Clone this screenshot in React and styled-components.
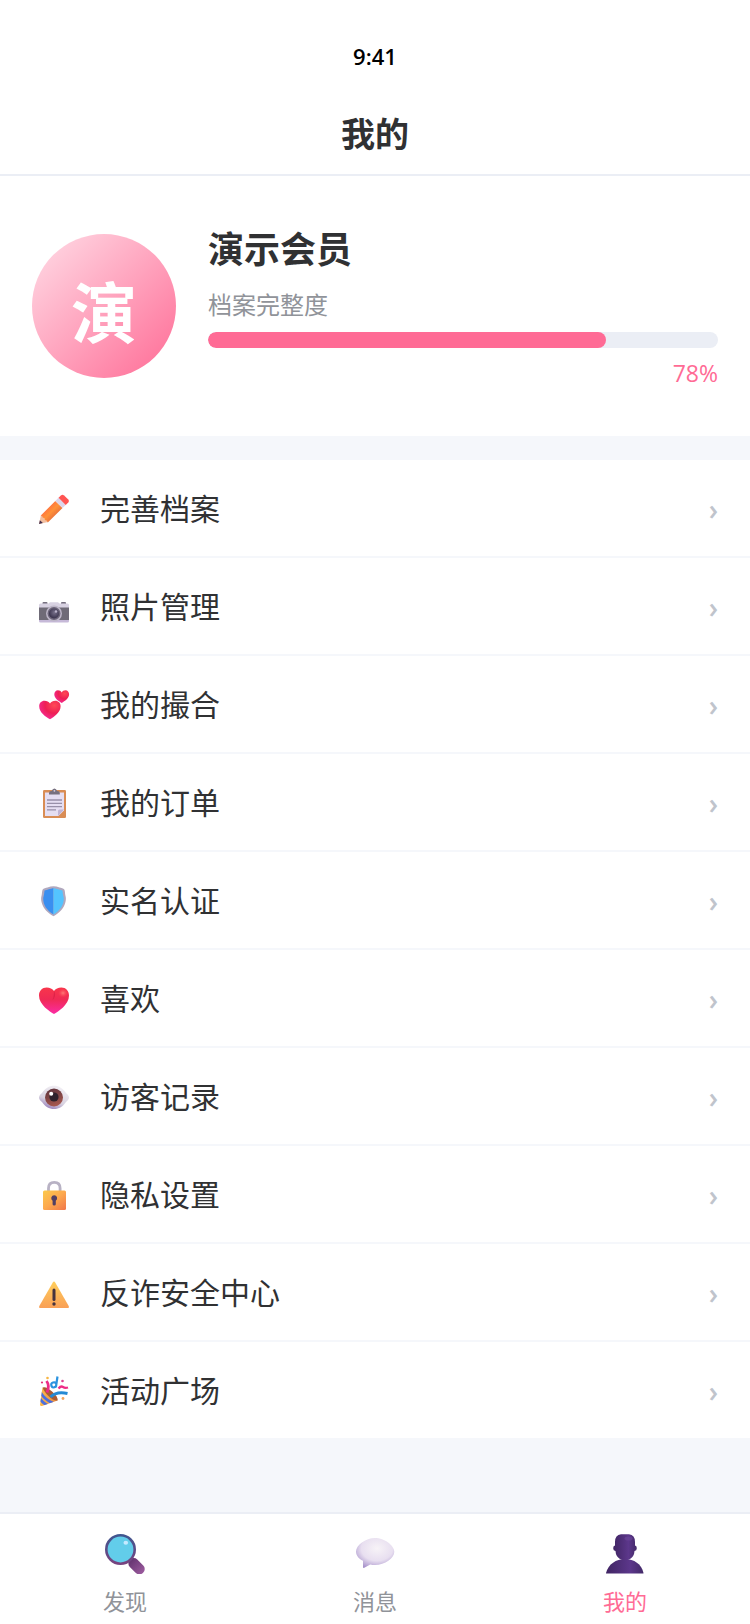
import React from 'react';
import styled, { createGlobalStyle, ThemeProvider } from 'styled-components';

const theme = {
	primary: '#ff6b95',
	primaryLight: '#ffdde7',
	background: '#f5f7fb',
	surface: '#ffffff',
	border: '#ebeef5',
	text: {
		primary: '#303133',
		muted: '#909399',
		faint: '#c0c4cc',
	},
};

const GlobalStyle = createGlobalStyle`
	* {
		box-sizing: border-box;
	}

	body {
		margin: 0;
		background: ${(p) => p.theme.background};
		color: ${(p) => p.theme.text.primary};
		font-family: 'Open Sans', 'Noto Sans CJK SC', sans-serif;
	}
`;

const Page = styled.div`
	display: flex;
	flex-direction: column;
	min-height: 100vh;
`;

const Header = styled.header`
	background: ${(p) => p.theme.surface};
	border-bottom: 2px solid ${(p) => p.theme.border};
	text-align: center;
	padding: 38px 32px 16px;
`;

const StatusTime = styled.div`
	color: #000;
	font-size: 22px;
	font-weight: 600;
	line-height: 36px;
`;

const Title = styled.h1`
	margin: 36px 0 0;
	font-size: 34px;
	font-weight: 700;
	line-height: 48px;
`;

const Main = styled.main`
	flex: 1;
`;

const Profile = styled.section`
	display: flex;
	align-items: center;
	gap: 32px;
	padding: 48px 32px;
	background: ${(p) => p.theme.surface};
`;

const Avatar = styled.div`
	display: flex;
	align-items: center;
	justify-content: center;
	flex-shrink: 0;
	width: 144px;
	height: 144px;
	padding-top: 12px;
	border-radius: 50%;
	background: linear-gradient(135deg, ${(p) => p.theme.primaryLight}, ${(p) => p.theme.primary});
	color: #fff;
	font-size: 66px;
	font-weight: 700;
	line-height: 1;
`;

const Info = styled.div`
	flex: 1;
	min-width: 0;
`;

const Name = styled.h2`
	margin: 0 0 12px;
	font-size: 36px;
	font-weight: 700;
	line-height: 52px;
`;

const Label = styled.div`
	margin-bottom: 10px;
	color: ${(p) => p.theme.text.muted};
	font-size: 24px;
	line-height: 34px;
`;

const Track = styled.div`
	height: 16px;
	border-radius: 8px;
	background: ${(p) => p.theme.border};
	overflow: hidden;
`;

const Fill = styled.div`
	height: 100%;
	border-radius: 8px;
	background: ${(p) => p.theme.primary};
`;

const Percent = styled.div`
	margin-top: 10px;
	color: ${(p) => p.theme.primary};
	font-size: 23px;
	line-height: 30px;
	text-align: right;
`;

const Menu = styled.nav`
	margin-top: 24px;
	background: ${(p) => p.theme.surface};
`;

const MenuItem = styled.a`
	display: flex;
	align-items: center;
	gap: 24px;
	padding: 25px 32px 23px;
	border-bottom: 2px solid ${(p) => p.theme.background};
	color: inherit;
	font-size: 30px;
	line-height: 48px;
	text-decoration: none;

	&:last-child {
		border-bottom: none;
	}

	&:active {
		background: ${(p) => p.theme.background};
	}
`;

const MenuIcon = styled.span`
	display: flex;
	justify-content: center;
	width: 44px;

	& svg {
		width: 32px;
		height: 32px;
	}
`;

const MenuText = styled.span`
	flex: 1;
`;

const Arrow = styled.span`
	color: ${(p) => p.theme.text.faint};
	font-size: 28px;
	font-weight: 600;
`;

const TabBar = styled.nav`
	position: sticky;
	bottom: 0;
	display: flex;
	background: ${(p) => p.theme.surface};
	border-top: 2px solid ${(p) => p.theme.border};
`;

const Tab = styled.a`
	flex: 1;
	display: flex;
	flex-direction: column;
	align-items: center;
	gap: 11px;
	padding: 20px 0 7px;
	color: ${(p) => (p.$active ? p.theme.primary : p.theme.text.muted)};
	font-size: 22px;
	line-height: 32px;
	text-decoration: none;

	& svg {
		width: 40px;
		height: 40px;
	}
`;

const Pencil = () => (
	<svg viewBox="0 0 32 32" aria-hidden="true">
		<defs>
			<linearGradient id="pencil-body" x1="8" y1="13" x2="18" y2="23" gradientUnits="userSpaceOnUse">
				<stop offset="0" stopColor="#ff6842" />
				<stop offset="0.55" stopColor="#ff9138" />
				<stop offset="1" stopColor="#e8713c" />
			</linearGradient>
		</defs>
		<path d="M1 31l2-9 7 7z" fill="#f3bfa0" />
		<path d="M1 31l.9-3.800 3 2.900z" fill="#43304f" />
		<path d="M2.800 22.500L17.300 8l7.200 7L9.800 29.500q-.8-2.300-2.800-2.500-.2-2.300-2.300-2.500-.2-1.500-1.900-2z" fill="url(#pencil-body)" />
		<path d="M17.300 8l3.200-3.200 7.200 7.200-3.200 3z" fill="#dcd5ea" />
		<path d="M20.500 4.800l2.400-2.400q1.600-1.300 3.200.1l4.200 4.100q1.400 1.500 0 3L27.700 12z" fill="#ff5452" />
	</svg>
);

const Camera = () => (
	<svg viewBox="0 0 32 32" aria-hidden="true">
		<defs>
			<radialGradient id="camera-lens" cx="0.55" cy="0.4" r="0.6">
				<stop offset="0" stopColor="#77708a" />
				<stop offset="1" stopColor="#37304a" />
			</radialGradient>
		</defs>
		<path d="M4.500 12q0-1 1-1h3q1 0 1 1v1h-5zM23 12q0-1 1-1h3q1 0 1 1v1h-5z" fill="#756f7f" />
		<path d="M1 14q0-1.500 1.500-1.500h8L12 11.200h8l1.500 1.300h8q1.500 0 1.500 1.500v3H1z" fill="#d8d2e2" />
		<path d="M1 16.500h30v13H1z" fill="#6f6b77" />
		<path d="M1 29h30v1q0 1.500-1.500 1.500h-27Q1 31.500 1 30z" fill="#c6b9d8" />
		<circle cx="16" cy="22.500" r="8" fill="#bdb6c8" />
		<circle cx="16" cy="22.500" r="6.500" fill="#6b6478" />
		<circle cx="16" cy="22.500" r="5" fill="url(#camera-lens)" />
		<circle cx="18" cy="20.500" r="1.200" fill="#bcb4cc" />
	</svg>
);

const Hearts = () => (
	<svg viewBox="0 0 32 32" aria-hidden="true">
		<defs>
			<radialGradient id="hearts-fill" cx="0.7" cy="0.25" r="0.85">
				<stop offset="0" stopColor="#ff4a55" />
				<stop offset="0.5" stopColor="#ee1f55" />
				<stop offset="1" stopColor="#f52d9e" />
			</radialGradient>
		</defs>
		<path
			d="M12 30.300C7.500 27.500 1.200 23.500 1.200 17.200c0-3 2.200-5.400 5.300-5.400 2.400 0 4.200 1 5.500 2.600 1.300-1.600 3-2.600 5.300-2.600 3.100 0 5.300 2.400 5.300 5.400 0 6-6.100 10.300-10.600 13.100z"
			fill="url(#hearts-fill)"
		/>
		<path
			d="M23.700 14C20.500 12 16.300 9.500 16.300 5.300c0-2.300 1.500-4 3.600-4 1.700 0 3 .8 3.800 2.100.8-1.300 2.200-2.100 3.800-2.100 2.100 0 3.600 1.700 3.600 4 0 4.200-4.200 6.700-7.400 8.700z"
			fill="url(#hearts-fill)"
		/>
	</svg>
);

const Clipboard = () => (
	<svg viewBox="0 0 32 32" aria-hidden="true">
		<rect x="5" y="3" width="23" height="28" rx="1.200" fill="#d98d55" />
		<path d="M7 5.500h19v18L20.500 29H7z" fill="#e5def2" />
		<path d="M20 29v-5q0-1.500 1.500-1.500H26z" fill="#c1b4d4" />
		<path d="M9 13h15M9 16.300h15M9 19.600h15M9 22.900h9" stroke="#9890a9" strokeWidth="1.300" />
		<path d="M11 7.500V6q0-2 2.200-2h.5q.8-2.500 2.700-2.500T19.100 4h.5q2.200 0 2.200 2v1.500z" fill="#77707f" />
		<circle cx="16.400" cy="3.800" r="0.900" fill="#d6cddf" />
	</svg>
);

const Shield = () => (
	<svg viewBox="0 0 32 32" aria-hidden="true">
		<path
			d="M15.500 1.200c2 0 4 .5 6 1.200 1.600.5 4 .6 4.800 2.200.8 1.700.6 3.900 1.100 5.900.7 2.500.7 4.500-.2 7.500-1.600 5.500-5.700 10-11.700 13.200C9.500 28 5.400 23.500 3.800 18c-.9-3-.9-5-.2-7.500.5-2 .3-4.200 1.100-5.900.8-1.600 3.200-1.700 4.800-2.200 2-.7 4-1.200 6-1.200z"
			fill="#b0a8be"
		/>
		<path d="M15.500 3c-3.500 1-6 1.800-9 2.500-.2 3-.7 5-1.300 7.500C5 20 9 25.500 15.500 29.500z" fill="#3a8ff0" />
		<path d="M15.500 3c3.500 1 6 1.800 9 2.500.2 3 .7 5 1.300 7.500C26 20 22 25.500 15.500 29.500z" fill="#54c4ff" />
	</svg>
);

const Heart = () => (
	<svg viewBox="0 0 32 32" aria-hidden="true">
		<defs>
			<linearGradient id="heart-fill" x1="0" y1="0" x2="0" y2="1">
				<stop offset="0" stopColor="#f8364b" />
				<stop offset="0.45" stopColor="#f02a55" />
				<stop offset="1" stopColor="#fb2ba4" />
			</linearGradient>
			<radialGradient id="heart-light" cx="0.5" cy="0.5" r="0.5">
				<stop offset="0" stopColor="#ff7a78" />
				<stop offset="1" stopColor="#ff4a58" stopOpacity="0" />
			</radialGradient>
		</defs>
		<path
			d="M16 31C12 28.500 1 22 1 12.500 1 7.600 4.200 4.400 8.600 4.400c3.300 0 5.900 1.200 7.400 3.600 1.500-2.400 4.100-3.600 7.400-3.600 4.400 0 7.600 3.200 7.600 8.100C31 22 20 28.500 16 31z"
			fill="url(#heart-fill)"
		/>
		<path d="M16 8c-.2 3-.2 6-1.500 9 2.500-2 3.500-6 1.500-9z" fill="#c9193f" opacity="0.5" />
		<ellipse cx="25" cy="10" rx="5" ry="4.500" fill="url(#heart-light)" />
	</svg>
);

const Eye = () => (
	<svg viewBox="0 0 32 32" aria-hidden="true">
		<defs>
			<linearGradient id="eye-white" x1="0.7" y1="0.1" x2="0.3" y2="1">
				<stop offset="0" stopColor="#f0edf3" />
				<stop offset="0.6" stopColor="#d8d2e0" />
				<stop offset="1" stopColor="#9880bb" />
			</linearGradient>
			<linearGradient id="eye-iris" x1="0.3" y1="0" x2="0.6" y2="1">
				<stop offset="0" stopColor="#60343d" />
				<stop offset="1" stopColor="#a9594f" />
			</linearGradient>
		</defs>
		<path
			d="M1 16.500c0-2 1.500-3 3-4.500 3-4.500 7-7.200 12-7.200s9 2.700 12 7.200c1.500 1.500 3 2.500 3 4.500s-1.500 3-3 4.500c-3 4.500-7 7-12 7s-9-2.500-12-7c-1.500-1.500-3-2.500-3-4.500z"
			fill="url(#eye-white)"
		/>
		<circle cx="16" cy="16.500" r="9" fill="url(#eye-iris)" />
		<circle cx="16" cy="16" r="4.600" fill="#2e222c" />
		<circle cx="13.200" cy="12.800" r="2" fill="#fff" />
	</svg>
);

const Lock = () => (
	<svg viewBox="0 0 32 32" aria-hidden="true">
		<defs>
			<linearGradient id="lock-body" x1="0" y1="0" x2="1" y2="1">
				<stop offset="0" stopColor="#fbc94c" />
				<stop offset="0.5" stopColor="#fda94e" />
				<stop offset="1" stopColor="#f0764b" />
			</linearGradient>
		</defs>
		<path d="M10.500 13V9.300q0-5.900 5.800-5.900t5.800 5.900V13" fill="none" stroke="#b8b2c4" strokeWidth="2.800" />
		<rect x="5" y="11.500" width="23" height="19.500" rx="1.500" fill="url(#lock-body)" />
		<path d="M16.200 16.200a3 3 0 0 1 1.600 5.500v3.500q0 1.200-1.600 1.200t-1.600-1.200v-3.500a3 3 0 0 1 1.600-5.500z" fill="#513f63" />
	</svg>
);

const Warning = () => (
	<svg viewBox="0 0 32 32" aria-hidden="true">
		<defs>
			<linearGradient id="warning-fill" x1="0" y1="0" x2="0" y2="1">
				<stop offset="0" stopColor="#ffce5b" />
				<stop offset="1" stopColor="#f9a057" />
			</linearGradient>
		</defs>
		<path d="M14.800 5.500q1.200-1.800 2.400 0L30.700 29q.8 2-1.200 2h-27q-2 0-1.200-2z" fill="url(#warning-fill)" />
		<rect x="14.500" y="11.500" width="3" height="12.500" rx="1.500" fill="#46333e" />
		<circle cx="16" cy="27" r="1.700" fill="#46333e" />
	</svg>
);

const Party = () => (
	<svg viewBox="0 0 32 32" aria-hidden="true">
		<defs>
			<linearGradient id="party-cone" x1="0" y1="0" x2="1" y2="0">
				<stop offset="0" stopColor="#ffc04d" />
				<stop offset="1" stopColor="#e6803d" />
			</linearGradient>
			<clipPath id="party-clip">
				<path d="M4.500 12.500L2 29.500q0 2 2 1.500l15.500-5.500Q20 18 4.500 12.500z" />
			</clipPath>
		</defs>
		<g clipPath="url(#party-clip)">
			<path d="M0 10h22v22H0z" fill="url(#party-cone)" />
			<path d="M2 17q5 8 13 11M1 22.500q4 6 9 8" fill="none" stroke="#4a6fe0" strokeWidth="2.800" />
		</g>
		<path d="M4.700 12.500Q8 11 14 16.500t5.500 9q-4 .5-9-4.500t-5.800-8.500z" fill="#a85b35" />
		<path d="M8.500 6q3.500 4.500.5 11.500" fill="none" stroke="#ee2b87" strokeWidth="2.800" />
		<path d="M19.500 1.500L18 11.500q-3.500 2.200-4.500-.5t1.500-3.500 3.200 1.500" fill="none" stroke="#2b93df" strokeWidth="2.200" />
		<path d="M12.500 22q6-6 17-3.500" fill="none" stroke="#258ad4" strokeWidth="3" />
		<path d="M20.500 13.500q2.500-3 4.500-1.500t5 .5" fill="none" stroke="#ee2b87" strokeWidth="2.200" />
		<circle cx="9.500" cy="3" r="1.300" fill="#f7b544" />
		<circle cx="4" cy="7.500" r="1.100" fill="#e5317f" />
		<circle cx="24.500" cy="6" r="1.300" fill="#dd3f91" />
		<circle cx="25" cy="23.500" r="1.400" fill="#f1a35c" />
	</svg>
);

const Magnifier = () => (
	<svg viewBox="0 0 40 40" aria-hidden="true">
		<defs>
			<linearGradient id="search-ring" x1="0" y1="0" x2="0" y2="1">
				<stop offset="0" stopColor="#40568f" />
				<stop offset="1" stopColor="#77437f" />
			</linearGradient>
			<linearGradient id="search-handle" x1="0" y1="0" x2="1" y2="0">
				<stop offset="0" stopColor="#63336f" />
				<stop offset="1" stopColor="#9a5a9d" />
			</linearGradient>
		</defs>
		<rect x="22.500" y="27" width="18.500" height="10.500" rx="5" transform="rotate(45 31.700 32)" fill="url(#search-handle)" />
		<circle cx="15.500" cy="15.500" r="14.200" fill="#62cdea" stroke="url(#search-ring)" strokeWidth="2.600" />
		<ellipse cx="20.800" cy="8.800" rx="2.300" ry="2" fill="#c5eaff" />
	</svg>
);

const Bubble = () => (
	<svg viewBox="0 0 40 40" aria-hidden="true">
		<defs>
			<radialGradient id="bubble-fill" cx="0.55" cy="0.35" r="0.75">
				<stop offset="0" stopColor="#f7f3f7" />
				<stop offset="0.55" stopColor="#e8dff0" />
				<stop offset="1" stopColor="#9c85c4" />
			</radialGradient>
		</defs>
		<path
			d="M20 4C10.500 4 1 11.500 1 17.500c0 4 2.500 7 7 9.300V33q0 1.200 1.300.8l6-3.300q2 .5 4.700.5c10 0 19.300-7 19.300-13.300C39.300 11.500 29.500 4 20 4z"
			fill="url(#bubble-fill)"
		/>
	</svg>
);

const Person = () => (
	<svg viewBox="0 0 40 40" aria-hidden="true">
		<defs>
			<linearGradient id="person-fill" x1="0" y1="0" x2="1" y2="0">
				<stop offset="0" stopColor="#402563" />
				<stop offset="0.65" stopColor="#5c378b" />
				<stop offset="1" stopColor="#432a68" />
			</linearGradient>
		</defs>
		<path d="M1 39C3.500 30 11 25 20 25s16.500 5 18.500 14q0 .5-.6.500H1.500q-.5 0-.5-.5z" fill="url(#person-fill)" />
		<path
			d="M16 .3h8q6 .7 6 7.700v3.500q1.800.3 1.800 2.700T29.500 17q-.3 5.500-4.500 8-2.500 1.200-5 1.200T15 25q-4.200-2.500-4.500-8-2.300-.4-2.300-2.800t1.800-2.700V8q0-7 6-7.700z"
			fill="url(#person-fill)"
		/>
		<ellipse cx="23.500" cy="4.500" rx="4" ry="2" fill="#6e489c" opacity="0.6" />
	</svg>
);

const member = { name: '演示会员', progress: 78 };

const menuItems = [
	{ text: '完善档案', to: '#archive', icon: Pencil },
	{ text: '照片管理', to: '#photos', icon: Camera },
	{ text: '我的撮合', to: '#matches', icon: Hearts },
	{ text: '我的订单', to: '#orders', icon: Clipboard },
	{ text: '实名认证', to: '#verify', icon: Shield },
	{ text: '喜欢', to: '#likes', icon: Heart },
	{ text: '访客记录', to: '#visitors', icon: Eye },
	{ text: '隐私设置', to: '#privacy', icon: Lock },
	{ text: '反诈安全中心', to: '#safety', icon: Warning },
	{ text: '活动广场', to: '#events', icon: Party },
];

const tabs = [
	{ text: '发现', to: '#discover', icon: Magnifier },
	{ text: '消息', to: '#messages', icon: Bubble },
	{ text: '我的', to: '#mine', icon: Person, active: true },
];

const App = () => (
	<ThemeProvider theme={theme}>
		<GlobalStyle />
		<Page>
			<Header>
				<StatusTime>9:41</StatusTime>
				<Title>我的</Title>
			</Header>

			<Main>
				<Profile>
					<Avatar>{member.name[0]}</Avatar>
					<Info>
						<Name>{member.name}</Name>
						<Label id="progress-label">档案完整度</Label>
						<Track
							role="progressbar"
							aria-labelledby="progress-label"
							aria-valuemin={0}
							aria-valuemax={100}
							aria-valuenow={member.progress}
						>
							<Fill style={{ width: `${member.progress}%` }} />
						</Track>
						<Percent>{member.progress}%</Percent>
					</Info>
				</Profile>

				<Menu>
					{menuItems.map(({ text, to, icon: Icon }) => (
						<MenuItem key={to} href={to}>
							<MenuIcon>
								<Icon />
							</MenuIcon>
							<MenuText>{text}</MenuText>
							<Arrow aria-hidden="true">›</Arrow>
						</MenuItem>
					))}
				</Menu>
			</Main>

			<TabBar>
				{tabs.map(({ text, to, icon: Icon, active }) => (
					<Tab key={to} href={to} $active={active} aria-current={active ? 'page' : undefined}>
						<Icon />
						{text}
					</Tab>
				))}
			</TabBar>
		</Page>
	</ThemeProvider>
);

export default App;
